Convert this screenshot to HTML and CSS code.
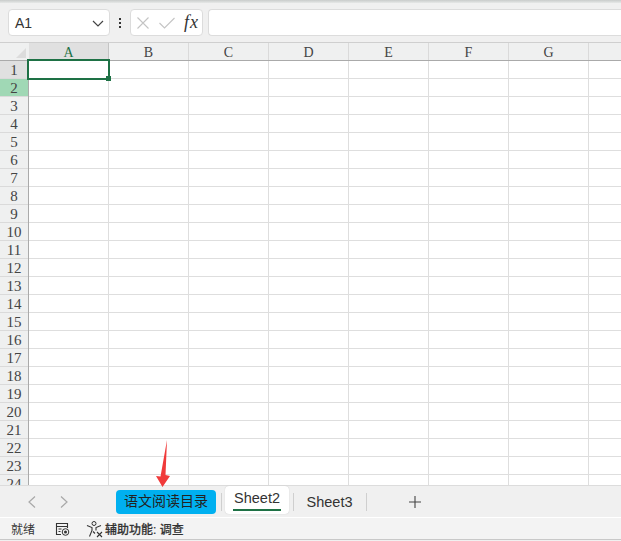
FILE: index.html
```html
<!DOCTYPE html>
<html lang="zh-CN">
<head>
    <meta charset="UTF-8">
    <title>Sheet</title>
    <link rel="stylesheet" href="styles.css">
</head>
<body>
    <div class="top-edge"></div>
    <div class="formula-bar">
        <div class="name-box">
            <span>A1</span>
            <svg width="14" height="14" viewBox="0 0 14 14"><path d="M2 5l5 5 5-5" fill="none" stroke="#444" stroke-width="1.2"/></svg>
        </div>
        <div class="dots"><i></i><i></i><i></i></div>
        <div class="fx-box">
            <svg width="14" height="14" viewBox="0 0 14 14"><path d="M1.5 1.5l11 11M12.5 1.5l-11 11" fill="none" stroke="#c4c4c4" stroke-width="1.1"/></svg>
            <svg width="18" height="14" viewBox="0 0 18 14"><path d="M1.5 7l5 5L16.5 2" fill="none" stroke="#c4c4c4" stroke-width="1.1"/></svg>
            <span class="fx">fx</span>
        </div>
        <div class="formula-input"></div>
    </div>
    <div class="sheet">
        <div class="col-heads">
            <div class="corner"><b></b></div>
            <div class="col-head active">A</div>
            <div class="col-head">B</div>
            <div class="col-head">C</div>
            <div class="col-head">D</div>
            <div class="col-head">E</div>
            <div class="col-head">F</div>
            <div class="col-head">G</div>
            <div class="col-head"></div>
        </div>
        <div class="body">
            <div class="row-heads">
                <div class="row-head first">1</div>
                <div class="row-head hl">2</div>
                <div class="row-head">3</div>
                <div class="row-head">4</div>
                <div class="row-head">5</div>
                <div class="row-head">6</div>
                <div class="row-head">7</div>
                <div class="row-head">8</div>
                <div class="row-head">9</div>
                <div class="row-head">10</div>
                <div class="row-head">11</div>
                <div class="row-head">12</div>
                <div class="row-head">13</div>
                <div class="row-head">14</div>
                <div class="row-head">15</div>
                <div class="row-head">16</div>
                <div class="row-head">17</div>
                <div class="row-head">18</div>
                <div class="row-head">19</div>
                <div class="row-head">20</div>
                <div class="row-head">21</div>
                <div class="row-head">22</div>
                <div class="row-head">23</div>
                <div class="row-head">24</div>
            </div>
            <div class="cells">
                <div class="selected"><b></b></div>
            </div>
        </div>
    </div>
    <div class="tabs">
        <svg class="nav" width="10" height="14" viewBox="0 0 10 14"><path d="M8 1.5L2 7l6 5.5" fill="none" stroke="#a8a8a8" stroke-width="1.2"/></svg>
        <svg class="nav next" width="10" height="14" viewBox="0 0 10 14"><path d="M2 1.5L8 7l-6 5.5" fill="none" stroke="#a8a8a8" stroke-width="1.2"/></svg>
        <div class="tab-color">语文阅读目录</div>
        <span class="sep"></span>
        <div class="tab-on"><span>Sheet2</span></div>
        <span class="sep"></span>
        <div class="tab">Sheet3</div>
        <span class="sep"></span>
        <svg class="add" width="12" height="12" viewBox="0 0 12 12"><path d="M6 0v12M0 6h12" fill="none" stroke="#444" stroke-width="1.1"/></svg>
    </div>
    <div class="status">
        <span>就绪</span>
        <svg class="macro" width="15" height="14" viewBox="0 0 15 14"><path d="M6 12.5H1.5v-11h11V6M1.5 4.5h11M3.500 7h3M3.500 9.500h2" fill="none" stroke="#333" stroke-width="1.1"/><circle cx="10.500" cy="10" r="3.300" fill="none" stroke="#333"/><circle cx="10.500" cy="10" r="1.500" fill="#333"/></svg>
        <svg class="access" width="18" height="18" viewBox="0 0 18 18"><circle cx="8" cy="3.500" r="2" fill="none" stroke="#333"/><path d="M1 5.500l5 2v3l-2.500 6M15 5.500l-5 2v3M7 11.500l2 2" fill="none" stroke="#333" stroke-width="1.1"/><path d="M11 12l5 5M16 12l-5 5" fill="none" stroke="#333" stroke-width="1.100"/></svg>
        <span class="access-text">辅助功能: 调查</span>
    </div>
    <svg class="arrow" width="18" height="50" viewBox="0 0 18 50"><path d="M12 1L10.500 36l4.500 1L7.500 48 1 37l4.500.5z" fill="#f03a3a"/></svg>
</body>
</html>
```

FILE: styles.css
```css
html, body {
    margin: 0;
    height: 100%;
}
body {
    position: relative;
    width: 621px;
    height: 541px;
    overflow: hidden;
    background: #f0f0f0;
    font-family: "Liberation Sans", "Noto Sans CJK SC", sans-serif;
    color: #333;
}
.top-edge {
    height: 3px;
    background: linear-gradient(#c9cccb, #e6e8e7);
}
.formula-bar {
    display: flex;
    align-items: center;
    height: 40px;
    padding: 0 0 0 8px;
    background: #f0f0f0;
    border-bottom: 1px solid #cfcfcf;
    box-sizing: border-box;
}
.name-box,
.fx-box,
.formula-input {
    height: 27px;
    box-sizing: border-box;
    background: #fff;
    border: 1px solid #dcdcdc;
    border-radius: 4px;
    display: flex;
    align-items: center;
}
.name-box {
    width: 102px;
    justify-content: space-between;
    padding: 0 4px 0 6px;
    font-size: 14px;
}
.dots {
    width: 20px;
    display: flex;
    flex-direction: column;
    align-items: center;
    gap: 2px;
}
.dots>i {
    width: 2px;
    height: 2px;
    background: #333;
}
.fx-box {
    width: 73px;
    padding-left: 5px;
    gap: 8px;
}
.fx {
    font-family: "Liberation Serif", serif;
    font-style: italic;
    font-size: 18px;
    letter-spacing: 1px;
}
.formula-input {
    flex: 1;
    margin-left: 5px;
    border-right: 0;
    border-radius: 4px 0 0 4px;
}
.sheet {
    height: 442px;
    overflow: hidden;
    background: #fff;
}
.col-heads {
    display: flex;
    height: 17px;
    background: #eff0f0;
    border-bottom: 1px solid #aaa;
}
.corner {
    width: 29px;
    position: relative;
    background: #eff0f0;
    flex: none;
}
.corner>b {
    position: absolute;
    right: 3px;
    bottom: 2px;
    border-style: solid;
    border-width: 0 0 10px 10px;
    border-color: transparent transparent #dcdcdc transparent;
}
.col-head {
    width: 80px;
    flex: none;
    box-sizing: border-box;
    border-right: 1px solid #dadada;
    text-align: center;
    font-family: "Liberation Serif", serif;
    font-size: 14px;
    line-height: 19px;
    color: #444;
}
.col-head.active {
    background: #e0e0e0;
    color: #1e7145;
    border-right-color: #c4c4c4;
}
.body {
    display: flex;
}
.row-heads {
    width: 29px;
    flex: none;
    box-sizing: border-box;
    border-right: 1px solid #aaa;
    background: #eff0f0;
}
.row-head {
    height: 18px;
    box-sizing: border-box;
    border-bottom: 1px solid #dadada;
    text-align: center;
    font-family: "Liberation Serif", serif;
    font-size: 15px;
    line-height: 19px;
    color: #444;
}
.row-head.first {
    background: #e0e0e0;
}
.row-head.hl {
    background: #a0d8b5;
}
.cells {
    position: relative;
    flex: 1;
    height: 432px;
    background-color: #fff;
    background-image:
        repeating-linear-gradient(to right, transparent 0 79px, #dedede 79px 80px),
        repeating-linear-gradient(to bottom, transparent 0 17px, #dedede 17px 18px);
}
.selected {
    position: absolute;
    left: -2px;
    top: -2px;
    width: 79px;
    height: 17px;
    border: 2px solid #1e7145;
}
.selected>b {
    position: absolute;
    right: -3px;
    bottom: -3px;
    width: 5px;
    height: 5px;
    background: #1e7145;
}
.tabs {
    display: flex;
    align-items: center;
    height: 31px;
    border-top: 1px solid #dcdcdc;
    background: #f0f0f0;
    font-size: 14px;
}
.nav {
    margin-left: 27px;
    flex: none;
}
.nav.next {
    margin-left: 22px;
}
.tab-color {
    margin-left: 47px;
    width: 100px;
    height: 24px;
    line-height: 23px;
    text-align: center;
    background: #00b0f0;
    border-radius: 4px;
    color: #222;
}
.sep {
    width: 1px;
    height: 18px;
    background: #cfcfcf;
    margin-left: 5px;
}
.tab-on {
    height: 28px;
    width: 64px;
    margin: -4px 0 0 3px;
    background: #fff;
    border-radius: 4px;
    box-shadow: 0 0 1px #bbb;
    box-sizing: border-box;
    text-align: center;
    font-size: 14.500px;
    line-height: 24px;
}
.tab-on>span {
    display: inline-block;
    width: 48px;
    height: 23px;
    border-bottom: 2px solid #1e7145;
}
.sep + .tab-on + .sep {
    margin-left: 4px;
}
.tab {
    width: 67px;
    box-sizing: border-box;
    padding-left: 4px;
    text-align: center;
    font-size: 14.500px;
}
.add {
    margin-left: 42px;
}
.status {
    display: flex;
    align-items: center;
    height: 21px;
    padding-left: 11px;
    border-top: 1px solid #fff;
    border-bottom: 1px solid #c8c8c8;
    background: #f3f3f3;
    font-size: 12px;
}
.macro {
    margin-left: 20px;
}
.access {
    margin-left: 16px;
}
.access-text {
    margin-left: 1px;
    font-weight: 500;
    -webkit-text-stroke: 0.2px #333;
}
.arrow {
    position: absolute;
    left: 155px;
    top: 439px;
}
```
